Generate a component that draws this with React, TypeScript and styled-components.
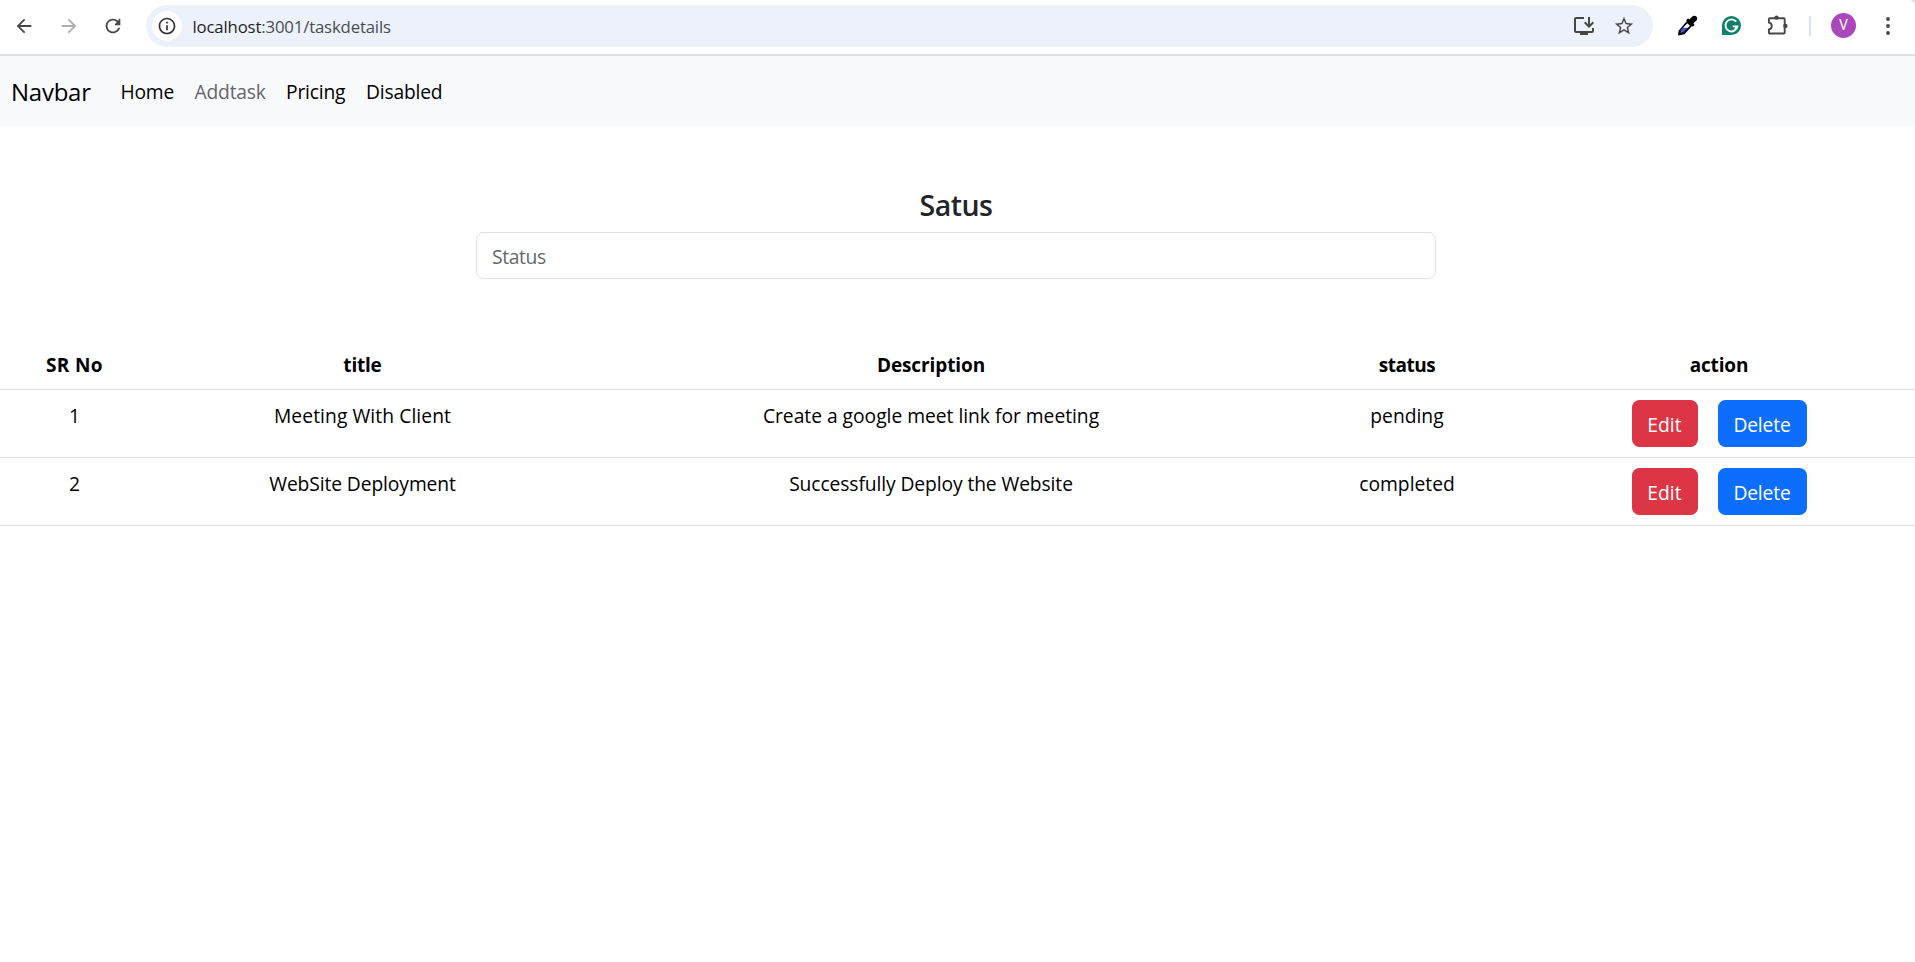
import React from "react";
import styled, { createGlobalStyle } from "styled-components";

const GlobalStyle = createGlobalStyle`
  * { box-sizing: border-box; }
  body {
    margin: 0;
    background: #fff;
    color: #000;
    font-family: "Open Sans", "Noto Sans", sans-serif;
    font-size: 19.25px;
    line-height: 30px;
  }
`;

const Page = styled.div`
  display: flex;
  flex-direction: column;
  min-height: 962px;
  background: #fff;
`;

/* Browser toolbar */
const ToolbarEdge = styled.div`
  background: #d3e3fd;
  border-bottom: 2px solid #dfe1de;
`;

const Toolbar = styled.header`
  display: flex;
  align-items: center;
  height: 54px;
  padding: 0 14px 3px 13px;
  background: #fff;
  border-top-right-radius: 6px;
`;

const NavButtons = styled.div`
  display: flex;
  gap: 22.5px;
  margin-right: 22px;
`;

const Icon = styled.svg<{ $size: number; $color?: string }>`
  display: block;
  flex: none;
  width: ${(p) => p.$size}px;
  height: ${(p) => p.$size}px;
  fill: ${(p) => p.$color ?? "#474747"};
`;

const AddressBar = styled.div`
  display: flex;
  align-items: center;
  flex: none;
  width: 1507px;
  height: 42px;
  margin-top: 1px;
  padding: 0 18.5px 0 6px;
  border-radius: 21px;
  background: #ecf1fa;
`;

const SiteInfo = styled.span`
  display: flex;
  align-items: center;
  justify-content: center;
  width: 30px;
  height: 30px;
  border-radius: 50%;
  background: #fff;
`;

const Url = styled.span`
  flex: 1;
  margin-left: 10.5px;
  padding-top: 1px;
  font-size: 16.75px;
  letter-spacing: -0.16px;
  color: #4a4d51;
`;

const Host = styled.span`
  color: #1f1f1f;
`;

const AddressActions = styled.div`
  display: flex;
  align-items: center;
  gap: 17px;
`;

const Extensions = styled.div`
  display: flex;
  align-items: center;
  gap: 24px;
  margin-left: 24px;
`;

const Profile = styled.div`
  display: flex;
  align-items: center;
  gap: 20px;
  margin-left: 19.5px;
`;

const Divider = styled.span`
  width: 2.5px;
  height: 20px;
  border-radius: 1px;
  background: #d3e3fd;
`;

const Avatar = styled.span`
  width: 25px;
  height: 25px;
  border-radius: 50%;
  background: #ab47bc;
  color: #fff;
  font: 14px/25px Roboto, sans-serif;
  text-align: center;
`;

/* Site navigation */
const Navbar = styled.nav`
  display: flex;
  align-items: center;
  height: 70px;
  padding: 0 10px 0 11px;
  background: #f8f9fb;
`;

const Brand = styled.a`
  margin-right: 19.5px;
  width: 80px;
  font-size: 24px;
  line-height: 37px;
  letter-spacing: -0.25px;
  white-space: nowrap;
`;

const NavLink = styled.a<{ $muted?: boolean; $width: number }>`
  width: ${(p) => p.$width}px;
  padding: 2px 0 0 10px;
  letter-spacing: -0.2px;
  white-space: nowrap;
  color: ${(p) => (p.$muted ? "#656668" : "#000")};
`;

/* Status filter */
const Filter = styled.section`
  display: flex;
  flex-direction: column;
  align-items: center;
  width: 1912px;
  padding: 61px 0 60px;
`;

const Heading = styled.h4`
  margin: 0 0 9px;
  font-size: 28.5px;
  line-height: 36px;
  font-weight: 600;
  letter-spacing: -0.5px;
  color: #212529;
`;

const StatusInput = styled.input`
  width: 960px;
  height: 47px;
  padding: 8px 15px 6px;
  border: 1px solid #dee2e6;
  border-radius: 7.5px;
  background: #fff;
  font: inherit;
  letter-spacing: -0.35px;
  &::placeholder {
    color: #63676b;
    opacity: 1;
  }
`;

/* Task table */
const Table = styled.table`
  width: 100%;
  table-layout: fixed;
  border-collapse: separate;
  border-spacing: 0;
  text-align: center;
`;

const Column = styled.col<{ $width: number }>`
  width: ${(p) => p.$width}px;
`;

const HeadCell = styled.th<{ $tracking: number }>`
  padding: 11px 10px 9px;
  border-bottom: 1px solid #dee0e2;
  font-weight: 700;
  font-size: 19px;
  letter-spacing: ${(p) => p.$tracking}px;
  &:last-child { padding-right: 15px; }
`;

const Cell = styled.td<{ $tracking?: number }>`
  padding: 11px 10px 9px;
  border-bottom: 1px solid #dee0e2;
  vertical-align: top;
  letter-spacing: ${(p) => p.$tracking ?? 0}px;
`;

const ActionCell = styled(Cell)`
  padding: 10px 15px 10px 10px;
`;

const Actions = styled.div`
  display: flex;
  justify-content: center;
  gap: 20px;
`;

const ActionButton = styled.button<{ $kind: "edit" | "delete" }>`
  width: ${(p) => (p.$kind === "edit" ? 66 : 89)}px;
  height: 47px;
  padding: 2px 0 0;
  border: 0;
  border-radius: 7.5px;
  background: ${(p) => (p.$kind === "edit" ? "#dc3545" : "#0d6efd")};
  color: #fff;
  font: inherit;
  letter-spacing: ${(p) => (p.$kind === "edit" ? 0.1 : -0.15)}px;
`;

const ARROW = "M20 11H7.83l5.59-5.59L12 4l-8 8 8 8 1.41-1.41L7.83 13H20v-2z";

const headers = [
  { label: "SR No", width: 149, tracking: 0.35 },
  { label: "title", width: 427, tracking: -0.2 },
  { label: "Description", width: 710, tracking: -0.1 },
  { label: "status", width: 242, tracking: -0.5 },
  { label: "action", width: 387, tracking: -0.15 },
];

const tasks = [
  {
    title: "Meeting With Client",
    titleTracking: 0.08,
    description: "Create a google meet link for meeting",
    descriptionTracking: -0.02,
    status: "pending",
  },
  {
    title: "WebSite Deployment",
    titleTracking: -0.1,
    description: "Successfully Deploy the Website",
    descriptionTracking: -0.1,
    status: "completed",
  },
];

function BrowserToolbar() {
  return (
    <ToolbarEdge>
      <Toolbar>
        <NavButtons>
          <Icon $size={22} viewBox="0 0 24 24"><path d={ARROW} /></Icon>
          <Icon $size={22} $color="#adadad" viewBox="0 0 24 24">
            <path d={ARROW} transform="rotate(180 12 12)" />
          </Icon>
          <Icon $size={22} viewBox="0 0 24 24">
            <path d="M17.65 6.35C16.2 4.9 14.21 4 12 4c-4.42 0-7.99 3.58-7.99 8s3.57 8 7.99 8c3.73 0 6.84-2.55 7.73-6h-2.08c-.82 2.33-3.04 4-5.65 4-3.31 0-6-2.69-6-6s2.69-6 6-6c1.66 0 3.14.69 4.22 1.78L14.2 9.7V11.2H20V4h-1.8v1.8z" />
          </Icon>
        </NavButtons>
        <AddressBar>
          <SiteInfo>
            <Icon $size={20} $color="#303134" viewBox="0 0 24 24">
              <path d="M11 7h2v2h-2zm0 4h2v6h-2zm1-9C6.48 2 2 6.48 2 12s4.48 10 10 10 10-4.48 10-10S17.52 2 12 2zm0 18c-4.41 0-8-3.59-8-8s3.59-8 8-8 8 3.59 8 8-3.59 8-8 8z" />
            </Icon>
          </SiteInfo>
          <Url><Host>localhost</Host>:3001/taskdetails</Url>
          <AddressActions>
            <Icon $size={24} viewBox="0 0 24 24">
              <path d="M20 17H4V5h8V3H4c-1.1 0-2 .9-2 2v12c0 1.1.9 2 2 2h4v2h8v-2h4c1.1 0 2-.9 2-2v-3h-2v3z" />
              <path d="M8 17h8v4H8z" />
              <path d="M17 14l5-5-1.41-1.41L18 10.17V3h-2v7.17l-2.59-2.58L12 9z" />
            </Icon>
            <Icon $size={22} viewBox="0 0 24 24">
              <path d="M22 9.24l-7.19-.62L12 2 9.19 8.63 2 9.24l5.46 4.73L5.82 21 12 17.27 18.18 21l-1.63-7.03L22 9.24zM12 15.4l-3.76 2.27 1-4.28-3.32-2.88 4.38-.38L12 6.1l1.71 4.04 4.38.38-3.32 2.88 1 4.28L12 15.4z" />
            </Icon>
          </AddressActions>
        </AddressBar>
        <Extensions>
          <Icon $size={21} $color="#000" viewBox="0 0 21 21">
            <path d="M10.4 5.6l5 5-7.9 8.6-3.6.9-2.3.4-.6-1.2.8-3.9z" />
            <path d="M10.3 8.2l2.6 2.5-2.2 2.3H5.9z" fill="#fff" />
            <path d="M5.9 12.7h5L6.5 17.3l-2.5.8-.5-.9.4-2.2z" fill="#4059c8" />
            <path d="M9.2 5.2l1.7-1.7 1.6 1 2.5-2.8c1.5-1.5 3.3-1.2 4.4-.1s1.2 2.9-.2 4.2l-2.7 2.5 1.1 1.6-1.9 1.9z" />
          </Icon>
          <Icon $size={19} $color="#11806a" viewBox="0 0 19 19">
            <path d="M9.5 0a9.5 9.5 0 1 1 0 19H0V9.5A9.5 9.5 0 0 1 9.5 0z" />
            <path d="M14.2 5.7A6 6 0 1 0 15.4 10.4H10.7M15.4 10.1L13.1 13.1" fill="none" stroke="#fff" strokeWidth="1.9" />
          </Icon>
          <Icon $size={24} viewBox="-2 0 24 24">
            <path
              d="M1.9 8.6V5.2q0-.9.9-.9H16.8q.9 0 .9.9V18.6q0 .9-.9.9H2.8q-.9 0-.9-.9V15.4C5.7 14.8 5.7 9.2 1.9 8.6z"
              fill="none" stroke="#474747" strokeWidth="1.9" strokeLinejoin="round"
            />
            <circle cx="9.5" cy="3.6" r="2.2" />
            <circle cx="18.4" cy="11.9" r="2.2" />
          </Icon>
        </Extensions>
        <Profile>
          <Divider />
          <Avatar>V</Avatar>
          <Icon $size={24} viewBox="0 0 24 24">
            <circle cx="12" cy="5" r="1.9" />
            <circle cx="12" cy="12" r="1.9" />
            <circle cx="12" cy="19" r="1.9" />
          </Icon>
        </Profile>
      </Toolbar>
    </ToolbarEdge>
  );
}

export default function App() {
  return (
    <>
      <GlobalStyle />
      <Page>
        <BrowserToolbar />
        <Navbar>
          <Brand>Navbar</Brand>
          <NavLink $width={74}>Home</NavLink>
          <NavLink $width={91.5} $muted>Addtask</NavLink>
          <NavLink $width={80}>Pricing</NavLink>
          <NavLink $width={96}>Disabled</NavLink>
        </Navbar>
        <Filter>
          <Heading>Satus</Heading>
          <StatusInput placeholder="Status" />
        </Filter>
        <Table>
          <colgroup>
            {headers.map((h) => <Column key={h.label} $width={h.width} />)}
          </colgroup>
          <thead>
            <tr>
              {headers.map((h) => (
                <HeadCell key={h.label} $tracking={h.tracking}>{h.label}</HeadCell>
              ))}
            </tr>
          </thead>
          <tbody>
            {tasks.map((task, i) => (
              <tr key={task.title}>
                <Cell>{i + 1}</Cell>
                <Cell $tracking={task.titleTracking}>{task.title}</Cell>
                <Cell $tracking={task.descriptionTracking}>{task.description}</Cell>
                <Cell>{task.status}</Cell>
                <ActionCell>
                  <Actions>
                    <ActionButton $kind="edit">Edit</ActionButton>
                    <ActionButton $kind="delete">Delete</ActionButton>
                  </Actions>
                </ActionCell>
              </tr>
            ))}
          </tbody>
        </Table>
      </Page>
    </>
  );
}
